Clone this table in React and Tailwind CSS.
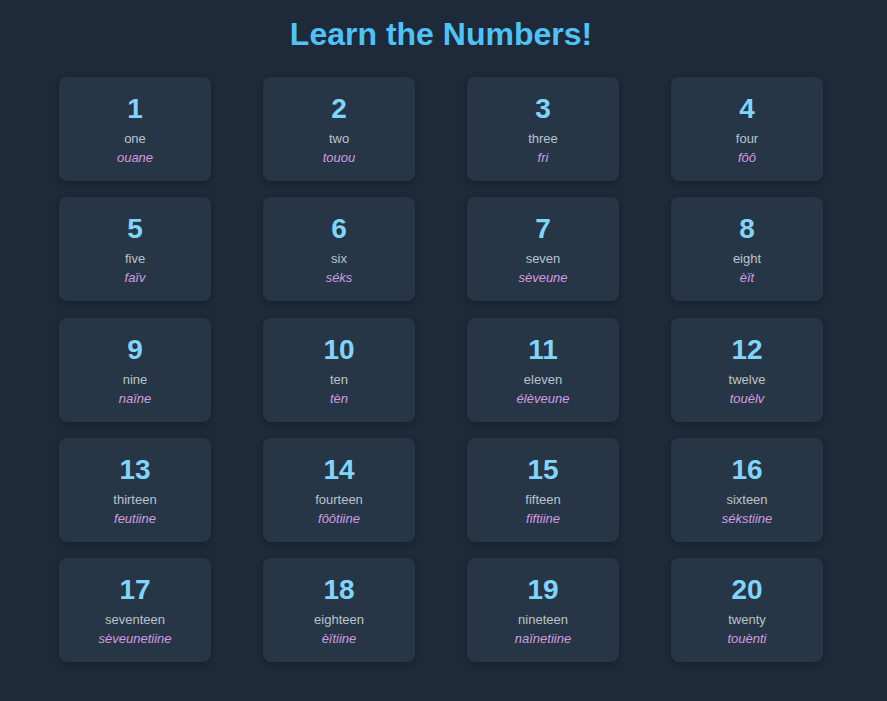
import React from "react";

const items = [
  ["1", "one", "ouane"],
  ["2", "two", "touou"],
  ["3", "three", "fri"],
  ["4", "four", "fôô"],
  ["5", "five", "faïv"],
  ["6", "six", "séks"],
  ["7", "seven", "sèveune"],
  ["8", "eight", "èït"],
  ["9", "nine", "naïne"],
  ["10", "ten", "tèn"],
  ["11", "eleven", "élèveune"],
  ["12", "twelve", "touèlv"],
  ["13", "thirteen", "feutiine"],
  ["14", "fourteen", "fôôtiine"],
  ["15", "fifteen", "fiftiine"],
  ["16", "sixteen", "sékstiine"],
  ["17", "seventeen", "sèveunetiine"],
  ["18", "eighteen", "èïtiine"],
  ["19", "nineteen", "naïnetiine"],
  ["20", "twenty", "touènti"],
];

export default function App() {
  return (
    <div
      className="min-h-[701px] w-full bg-[#1e2a39] pt-[16px]"
      style={{ fontFamily: '"Liberation Sans", Arial, sans-serif' }}
    >
      <h1 className="pr-[5px] text-center text-[32px] font-bold leading-[37px] text-[#4fc3f7]">
        Learn the Numbers!
      </h1>
      <div className="mt-[24px] grid grid-cols-[repeat(4,152px)] gap-x-[52px] gap-y-[16.25px] pl-[59px]">
        {items.map(([n, en, fr]) => (
          <div
            key={n}
            className="flex h-[104px] flex-col items-center rounded-[8px] bg-[#273647] pt-[16px] shadow-[0_2px_6px_rgba(0,0,0,0.25)]"
          >
            <div className="text-[28px] font-bold leading-[32px] text-[#81d4fa]">{n}</div>
            <div className="mt-[6px] text-[13px] leading-[16px] text-[#b8c4cc]">{en}</div>
            <div className="mt-[3px] text-[13px] italic leading-[16px] text-[#d39be0]">{fr}</div>
          </div>
        ))}
      </div>
    </div>
  );
}
